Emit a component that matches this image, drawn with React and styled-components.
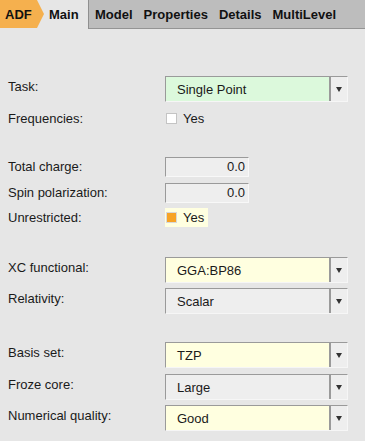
import styled, { createGlobalStyle } from "styled-components";

const GlobalStyle = createGlobalStyle`
  html, body {
    margin: 0;
    padding: 0;
    background: #e6e6e6;
  }
  body {
    font-family: "Liberation Sans", Arial, sans-serif;
    font-size: 13px;
    color: #1a1a1a;
  }
`;

const App = () => {
  return (
    <Page>
      <GlobalStyle />
      <Header>
        <Crumb>ADF</Crumb>
        <ActiveTab>Main</ActiveTab>
        <TabBar>
          <Tab>Model</Tab>
          <Tab>Properties</Tab>
          <Tab>Details</Tab>
          <Tab>MultiLevel</Tab>
        </TabBar>
      </Header>

      <Section top={47}>
        <Row h={26}>
          <Label lift>Task:</Label>
          <Combo bg="#dcf9dc">
            <ComboText>Single Point</ComboText>
            <ComboArrow><Triangle /></ComboArrow>
          </Combo>
        </Row>
        <Row h={20} gap={6}>
          <Label>Frequencies:</Label>
          <Check>
            <Box />
            <span>Yes</span>
          </Check>
        </Row>
      </Section>

      <Section top={29}>
        <Row h={19}>
          <Label>Total charge:</Label>
          <Field>0.0</Field>
        </Row>
        <Row h={19} gap={7}>
          <Label>Spin polarization:</Label>
          <Field>0.0</Field>
        </Row>
        <Row h={19} gap={6}>
          <Label>Unrestricted:</Label>
          <Check highlight>
            <Box checked />
            <span>Yes</span>
          </Check>
        </Row>
      </Section>

      <Section top={30}>
        <Row h={26}>
          <Label lift>XC functional:</Label>
          <Combo bg="#ffffe0">
            <ComboText>GGA:BP86</ComboText>
            <ComboArrow><Triangle /></ComboArrow>
          </Combo>
        </Row>
        <Row h={26} gap={5}>
          <Label lift>Relativity:</Label>
          <Combo bg="#eeeeee">
            <ComboText>Scalar</ComboText>
            <ComboArrow><Triangle /></ComboArrow>
          </Combo>
        </Row>
      </Section>

      <Section top={28}>
        <Row h={26}>
          <Label lift>Basis set:</Label>
          <Combo bg="#ffffe0">
            <ComboText>TZP</ComboText>
            <ComboArrow><Triangle /></ComboArrow>
          </Combo>
        </Row>
        <Row h={26} gap={6}>
          <Label lift>Froze core:</Label>
          <Combo bg="#eeeeee">
            <ComboText>Large</ComboText>
            <ComboArrow><Triangle /></ComboArrow>
          </Combo>
        </Row>
        <Row h={26} gap={5}>
          <Label lift>Numerical quality:</Label>
          <Combo bg="#ffffe0">
            <ComboText>Good</ComboText>
            <ComboArrow><Triangle /></ComboArrow>
          </Combo>
        </Row>
      </Section>
    </Page>
  );
};

const Page = styled.div`
  width: 365px;
  height: 441px;
  overflow: hidden;
  background: #e6e6e6;
`;

const Header = styled.div`
  display: flex;
  height: 29px;
  font-weight: bold;
  font-size: 13px;
  color: #111;
`;

const Crumb = styled.div`
  width: 44px;
  height: 28px;
  box-sizing: border-box;
  padding-left: 5px;
  display: flex;
  align-items: center;
  background: #f5b04e;
  clip-path: polygon(0 0, 37px 0, 44px 50%, 37px 100%, 0 100%);
`;

const ActiveTab = styled.div`
  width: 45px;
  height: 29px;
  box-sizing: border-box;
  padding-left: 5px;
  padding-bottom: 1px;
  display: flex;
  align-items: center;
  border-right: 1px solid #8f8f8f;
`;

const TabBar = styled.div`
  flex: 1;
  display: flex;
  align-items: center;
  gap: 11px;
  height: 28px;
  padding-left: 6px;
  background: #bdbdbd;
  border-bottom: 1px solid #949494;
`;

const Tab = styled.span`
  white-space: nowrap;
`;

const Section = styled.div`
  display: flex;
  flex-direction: column;
  margin-top: ${(p) => p.top}px;
  padding-left: 8px;
`;

const Row = styled.div`
  display: flex;
  align-items: center;
  height: ${(p) => p.h}px;
  margin-top: ${(p) => p.gap || 0}px;
`;

const Label = styled.div`
  width: 157px;
  flex-shrink: 0;
  margin-top: ${(p) => (p.lift ? "-5px" : "0")};
`;

const Combo = styled.div`
  width: 183px;
  height: 26px;
  box-sizing: border-box;
  display: flex;
  align-items: stretch;
  background: ${(p) => p.bg};
  border-top: 1px solid #9a9a9a;
  border-left: 1px solid #9a9a9a;
  border-right: 1px solid #f6f6f6;
  border-bottom: 1px solid #f6f6f6;
`;

const ComboText = styled.div`
  flex: 1;
  display: flex;
  align-items: center;
  padding-left: 11px;
  padding-top: 1px;
`;

const ComboArrow = styled.div`
  width: 16px;
  display: flex;
  align-items: center;
  justify-content: center;
  background: #eeeeee;
  border-left: 2px solid #9a9a9a;
`;

const Triangle = styled.div`
  width: 0;
  height: 0;
  border-left: 3.5px solid transparent;
  border-right: 3.5px solid transparent;
  border-top: 5px solid #333;
  margin-top: 1px;
`;

const Field = styled.div`
  width: 84px;
  height: 20px;
  box-sizing: border-box;
  display: flex;
  align-items: center;
  justify-content: flex-end;
  padding-right: 3px;
  background: #eeeeee;
  border-top: 1px solid #9a9a9a;
  border-left: 1px solid #9a9a9a;
  border-right: 1px solid #f8f8f8;
  border-bottom: 1px solid #f8f8f8;
`;

const Check = styled.div`
  display: flex;
  align-items: center;
  gap: 6px;
  height: 19px;
  padding-left: 1px;
  padding-right: 4px;
  background: ${(p) => (p.highlight ? "#ffffe0" : "transparent")};
`;

const Box = styled.div`
  width: 11px;
  height: 11px;
  box-sizing: border-box;
  background: ${(p) => (p.checked ? "#f7a325" : "#ffffff")};
  border: 1px solid ${(p) => (p.checked ? "#d8d8d8" : "#c4c4c4")};
`;

export default App;
